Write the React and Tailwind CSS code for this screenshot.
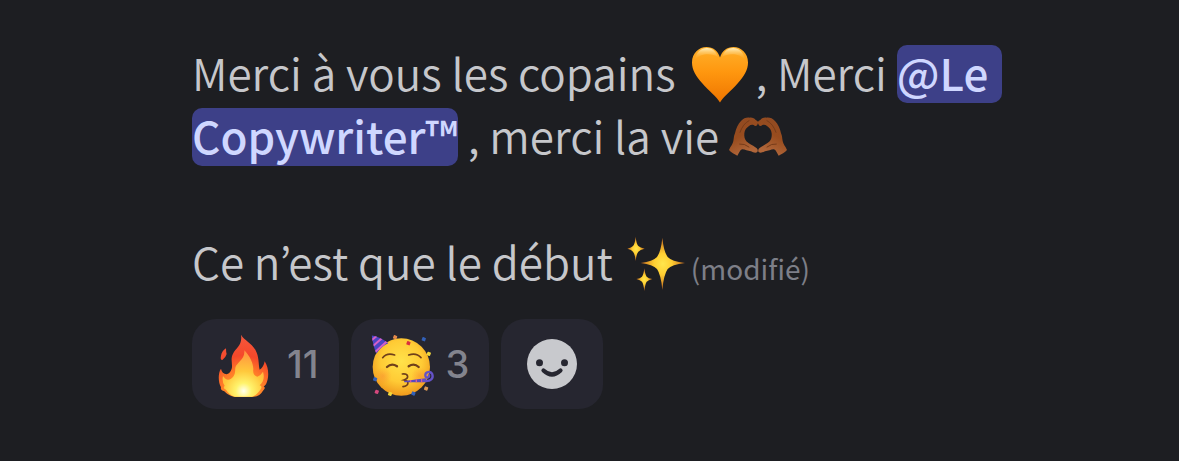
function OrangeHeart() {
  return (
    <svg viewBox="0 0 58 58" role="img" aria-label="cœur orange" className="mx-1.5 inline-block size-[58px] align-[-12px]">
      <defs>
        <linearGradient id="heart" x1="0" y1="0" x2="0" y2="1">
          <stop offset="0" stopColor="#ffb02a" />
          <stop offset="0.45" stopColor="#ff970f" />
          <stop offset="1" stopColor="#ee7500" />
        </linearGradient>
        <linearGradient id="shine" x1="0" y1="0" x2="0" y2="1">
          <stop offset="0" stopColor="#fff3c8" stopOpacity="0.95" />
          <stop offset="1" stopColor="#ffb02a" stopOpacity="0" />
        </linearGradient>
      </defs>
      <path
        fill="url(#heart)"
        d="M29 57.5C26 52 18 46 11 38C5 31 1 25 1 17.500C1 8 8 2 15.500 2C22 2 27 6 29 12.500C31 6 36 2 42.500 2C50 2 57 8 57 17.500C57 25 53 31 47 38C40 46 32 52 29 57.500Z"
      />
      <path fill="url(#shine)" d="M4 15C5 7 10 3 16 3C21 3 25 6 27 12C21 8 9 8 4 15Z" />
      <path fill="url(#shine)" d="M31 12C33 6 37 3 42 3C48 3 53 7 54 15C49 8 37 8 31 12Z" />
    </svg>
  );
}

function HeartHands() {
  const hand =
    "M0 126C5 114 12 108 13 99C15 90 14 84 18 76C21 62 27 48 36 39C43 31 52 28 61 29C70 28 77 31 80 36C86 38 89 43 86 48C84 54 79 56 74 51C69 49 64 50 60 54C52 59 47 66 46 76C45 86 47 93 52 100C60 108 71 112 79 118C86 122 88 128 85 132C80 136 72 133 66 130C56 129 46 123 39 124C32 127 30 136 25 143C17 139 6 133 0 126Z";
  return (
    <svg viewBox="0 0 174 174" role="img" aria-label="mains en cœur" className="inline-block size-[58px] align-[-12px]">
      <defs>
        <linearGradient id="skin" x1="0" y1="0" x2="0.4" y2="1">
          <stop offset="0" stopColor="#8e4a24" />
          <stop offset="0.55" stopColor="#984c1e" />
          <stop offset="1" stopColor="#b0663a" />
        </linearGradient>
      </defs>
      {["", "translate(174 0) scale(-1 1)"].map((flip) => (
        <g key={flip} transform={flip || undefined}>
          <path d={hand} fill="url(#skin)" />
          <path
            d="M60 38Q42 47 33 73M32 108Q46 106 60 117"
            fill="none"
            stroke="#763b19"
            strokeWidth="3"
            strokeLinecap="round"
          />
        </g>
      ))}
    </svg>
  );
}

function Sparkles() {
  return (
    <svg viewBox="0 0 174 174" role="img" aria-label="étincelles" className="ml-1 inline-block size-[58px] align-[-12px]">
      <defs>
        <radialGradient id="spark">
          <stop offset="0" stopColor="#ffe64d" />
          <stop offset="0.4" stopColor="#ffcf32" />
          <stop offset="1" stopColor="#c2651c" />
        </radialGradient>
      </defs>
      <g fill="url(#spark)">
        <path d="M106 11Q110 52 122 69Q134 82 174 87Q134 92 122 105Q110 122 106 168Q102 122 90 105Q78 92 41 87Q78 82 90 69Q102 52 106 11Z" />
        <path d="M26 8Q28 29 34 36Q39 41 53 44Q39 47 34 53Q28 60 26 81Q24 60 18 53Q14 47 1 44Q14 41 18 36Q24 29 26 8Z" />
        <path d="M52 103Q54 121 59 128Q64 133 76 135Q64 138 59 143Q54 151 52 171Q50 151 45 143Q40 138 28 135Q40 133 45 128Q50 121 52 103Z" />
      </g>
    </svg>
  );
}

function Fire() {
  return (
    <svg viewBox="0 0 186 195" aria-hidden="true" className="h-[65px] w-[62px]">
      <defs>
        <radialGradient id="flame" gradientUnits="userSpaceOnUse" cx="94" cy="178" r="165">
          <stop offset="0" stopColor="#ffb22c" />
          <stop offset="0.4" stopColor="#ff7a28" />
          <stop offset="0.65" stopColor="#f5482a" />
          <stop offset="1" stopColor="#f4573c" />
        </radialGradient>
        <radialGradient id="core" gradientUnits="userSpaceOnUse" cx="95" cy="177" r="120">
          <stop offset="0" stopColor="#fffff0" />
          <stop offset="0.2" stopColor="#fff36c" />
          <stop offset="0.5" stopColor="#ffc83c" />
          <stop offset="1" stopColor="#ff9140" />
        </radialGradient>
      </defs>
      <g fill="url(#flame)">
        <path d="M87 8C96 24 118 33 130 53C142 74 139 96 143 113C151 109 156 99 158 88C172 109 171 138 162 157L155 164Q163 166 153 176C147 188 133 195 120 195H68C54 192 42 184 37 178Q24 174 27 166C19 153 17 124 27 110Q30 125 44 127Q56 122 59 110C63 97 54 82 63 65C72 48 92 40 87 8Z" />
        <path d="M42 49Q42 60 44 66Q41 77 31 84Q24 84 27 71Q29 58 42 49Z" />
      </g>
      <path
        fill="url(#core)"
        d="M97 55C112 71 124 92 124 112C122 124 127 132 136 134Q146 131 153 119C159 137 153 152 143 160Q153 164 145 173C137 185 126 194 119 194H69C57 191 49 184 42 173Q31 168 38 161Q29 149 33 132Q44 149 57 140C71 131 69 117 70 107C74 90 99 84 97 55Z"
      />
    </svg>
  );
}

const confetti = [
  [72, 15, "#e58a4b"],
  [112, 33, "#d92f3e"],
  [158, 21, "#3260b8"],
  [173, 65, "#f0d63c"],
  [12, 141, "#3260b8"],
  [17, 179, "#d6487e"],
  [57, 185, "#f0d63c"],
  [127, 184, "#3260b8"],
  [165, 169, "#dc9a55"],
];

function PartyFace() {
  return (
    <svg viewBox="0 0 186 195" aria-hidden="true" className="h-[65px] w-[62px] overflow-visible">
      <defs>
        <radialGradient id="face" cx="0.5" cy="0.4" r="0.6">
          <stop offset="0" stopColor="#ffe24a" />
          <stop offset="0.6" stopColor="#ffcb35" />
          <stop offset="1" stopColor="#f09a1d" />
        </radialGradient>
        <radialGradient id="cheek">
          <stop offset="0" stopColor="#f98b32" stopOpacity="0.5" />
          <stop offset="1" stopColor="#f98b32" stopOpacity="0" />
        </radialGradient>
        <clipPath id="hat">
          <path d="M2 10Q30 16 52 34Q34 40 16 65Q6 42 2 10Z" />
        </clipPath>
      </defs>
      <circle cx="91" cy="105" r="86" fill="url(#face)" />
      <circle cx="36" cy="132" r="26" fill="url(#cheek)" />
      <circle cx="147" cy="132" r="26" fill="url(#cheek)" />
      <g clipPath="url(#hat)">
        <rect width="60" height="70" fill="#4c45c4" />
        <path d="M-2 28L22 8M2 46L36 16M6 66L52 24" stroke="#d660c6" strokeWidth="6" />
      </g>
      <g fill="none" stroke="#70401a" strokeLinecap="round">
        <path d="M35 77Q48 61 71 69M113 69Q136 61 150 77" strokeWidth="5" />
        <path d="M48 105Q62 92 78 103M113 103Q129 92 143 105" strokeWidth="7" />
        <path d="M94 126C112 124 116 138 99 144C116 147 114 161 96 164" strokeWidth="5" />
      </g>
      <path d="M99 147L164 139L169 151L100 151Z" fill="#5a49bd" />
      <path d="M119 144V151M136 142V151M152 141V151" stroke="#d45c9e" strokeWidth="4" />
      <path
        d="M158 145C178 151 188 139 184 127C179 116 162 119 163 131C164 140 177 137 174 130"
        fill="none"
        stroke="#6452c8"
        strokeWidth="7"
        strokeLinecap="round"
      />
      {confetti.map(([x, y, color]) => (
        <rect key={`${x}-${y}`} x={x - 5} y={y - 5} width="11" height="11" rx="2" fill={color} transform={`rotate(20 ${x} ${y})`} />
      ))}
    </svg>
  );
}

function Smiley() {
  return (
    <svg viewBox="0 0 50 50" aria-hidden="true" className="size-[50px]">
      <circle cx="25" cy="25" r="25" fill="#c8c9cd" />
      <g fill="#262630">
        <circle cx="12.500" cy="23.700" r="3.500" />
        <circle cx="37.500" cy="23.700" r="3.500" />
      </g>
      <path d="M16.500 31.500Q25 39.500 33.500 31.500" fill="none" stroke="#262630" strokeWidth="4.200" strokeLinecap="round" />
    </svg>
  );
}

function Mention({ children, className = "" }) {
  return (
    <span className={`inline-block rounded-[10px] bg-[#3d4088] pb-1 font-medium leading-[54px] text-[#cfd7ff] ${className}`}>
      {children}
    </span>
  );
}

function Reaction({ emoji, label, count }) {
  return (
    <button
      type="button"
      aria-label={`${label}, ${count}`}
      className="flex h-[90px] items-center gap-[13px] rounded-3xl bg-[#262630] px-5"
    >
      {emoji}
      <span className="font-[Inter,sans-serif] text-[38px] leading-none font-medium text-[#83848e]">{count}</span>
    </button>
  );
}

export default function App() {
  return (
    <main className="min-h-screen bg-[#1d1e22] pt-[41px] pr-10 pb-12 pl-48 font-['Noto_Sans_CJK_KR',sans-serif] text-[#c6c7cb]">
      <div className="max-w-[840px] text-[44px] leading-[63px] font-[350]">
        <p>
          Merci à vous les copains <OrangeHeart />, Merci <Mention className="pr-3.5">@Le</Mention>{" "}
          <Mention>Copywriter™</Mention> , merci la vie <HeartHands />
        </p>
        <p className="mt-[63px]">
          Ce n’est que le début <Sparkles />
          <span className="text-[28px] leading-none font-normal text-[#7d7f88]"> (modifié)</span>
        </p>
      </div>

      <div className="mt-[26px] flex flex-wrap gap-3">
        <Reaction emoji={<Fire />} label="feu" count={11} />
        <Reaction emoji={<PartyFace />} label="fête" count={3} />
        <button
          type="button"
          aria-label="Ajouter une réaction"
          className="flex h-[90px] items-center rounded-3xl bg-[#262630] px-[26px]"
        >
          <Smiley />
        </button>
      </div>
    </main>
  );
}
